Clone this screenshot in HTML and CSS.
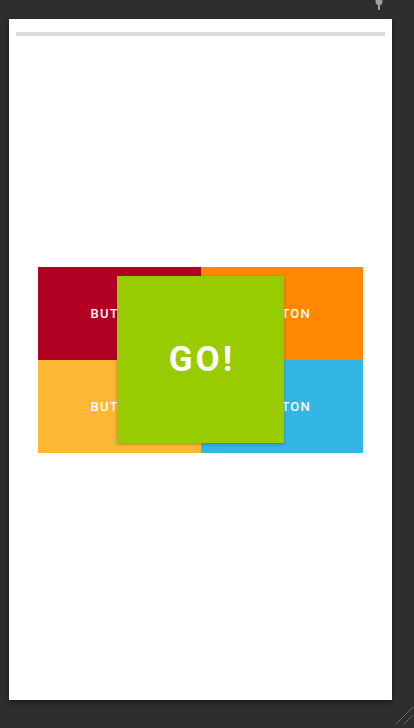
FILE: index.html
```html
<!DOCTYPE html>
<html>
<head>
<meta charset="utf-8">
<link rel="stylesheet" href="styles.css">
</head>
<body>
<div class="frame">
  <div class="toolbar">
    <svg class="pin" width="10" height="12" viewBox="0 0 10 12"><circle cx="5" cy="2.5" r="3.5" fill="#a0a0a0"/><rect x="4" y="4" width="2" height="7" fill="#a0a0a0"/></svg>
  </div>
  <div class="panel">
    <div class="bar"></div>
    <div class="content">
      <div class="stack">
        <div class="grid">
          <div class="btn red">BUTTON</div>
          <div class="btn orange">BUTTON</div>
          <div class="btn yellow">BUTTON</div>
          <div class="btn blue">BUTTON</div>
        </div>
        <div class="go">GO!</div>
      </div>
    </div>
  </div>
  <svg class="grip" width="20" height="20" viewBox="0 0 20 20"><line x1="2" y1="19" x2="19" y2="2" stroke="#8a8a8a" stroke-width="1" stroke-dasharray="1.5 0.8"/><line x1="10" y1="19" x2="19" y2="10" stroke="#8a8a8a" stroke-width="1" stroke-dasharray="1.5 0.8"/></svg>
</div>
</body>
</html>
```

FILE: styles.css
```css
html, body {
  margin: 0;
  padding: 0;
  background: #2d2e30;
  font-family: Roboto, "Liberation Sans", sans-serif;
}
.frame {
  position: relative;
  width: 414px;
  height: 728px;
  overflow: hidden;
}
.toolbar {
  height: 19px;
  display: flex;
  justify-content: flex-end;
  padding-right: 30px;
  box-sizing: border-box;
}
.pin {
  display: block;
  margin-top: -1px;
}
.panel {
  margin-left: 9px;
  width: 383px;
  height: 681px;
  background: #ffffff;
  box-shadow: 0 2px 4px rgba(0, 0, 0, 0.5);
  display: flex;
  flex-direction: column;
  padding: 13px 7px 17px 7px;
  box-sizing: border-box;
}
.bar {
  height: 4px;
  background: #dcdcdc;
}
.content {
  flex: 1;
  display: flex;
  align-items: center;
  justify-content: center;
}
.stack {
  display: grid;
}
.grid, .go {
  grid-area: 1 / 1;
}
.grid {
  display: grid;
  grid-template-columns: 163px 162px;
  grid-template-rows: 93px 93px;
}
.btn {
  display: flex;
  align-items: center;
  justify-content: center;
  color: #ffffff;
  font-size: 13px;
  font-weight: 500;
  letter-spacing: 1.2px;
  padding-top: 1px;
}
.red { background: #b00024; }
.orange { background: #ff8800; }
.yellow { background: #ffb833; }
.blue { background: #33b5e5; }
.go {
  place-self: center;
  width: 167px;
  height: 167px;
  background: #99cc00;
  box-shadow: 0 1px 3px rgba(0, 0, 0, 0.3);
  display: flex;
  align-items: center;
  justify-content: center;
  color: #ffffff;
  font-size: 35px;
  font-weight: 700;
  letter-spacing: 3px;
  padding-left: 3px;
  box-sizing: border-box;
}
.grip {
  position: absolute;
  right: 0;
  bottom: 3px;
}
```
